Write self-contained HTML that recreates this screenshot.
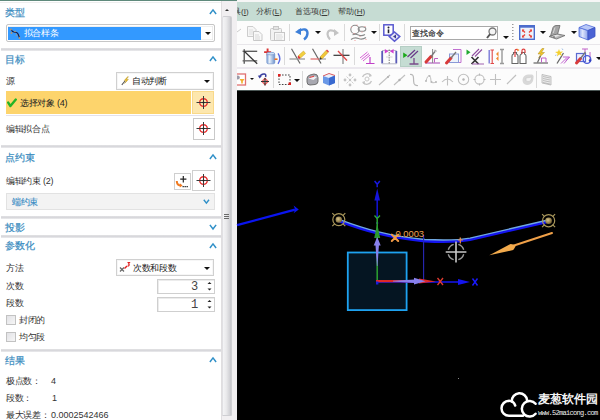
<!DOCTYPE html>
<html><head><meta charset="utf-8">
<style>
*{margin:0;padding:0;box-sizing:border-box}
html,body{width:600px;height:420px;overflow:hidden;background:#fff;font-family:"Liberation Sans",sans-serif;font-size:9px;color:#333}
.a{position:absolute}
.hdr{position:absolute;color:#3a8cc0;font-size:10px;line-height:10px;left:5px;white-space:nowrap;-webkit-text-stroke:0.2px #3a8cc0}
.lbl{position:absolute;color:#333;font-size:9px;line-height:10px;letter-spacing:-0.3px;left:6px;white-space:nowrap}
.sep{position:absolute;left:1px;width:220px;height:3px;background:linear-gradient(#e2e2e4,#d8d8dc 50%,#ececee)}
.chev{position:absolute;left:208px;width:10px;height:7px}
.box{position:absolute;border:1px solid #c9c9c9;background:#fff}
.dd{position:absolute;width:0;height:0;border-left:3px solid transparent;border-right:3px solid transparent;border-top:3px solid #111}
svg{position:absolute;overflow:visible}
</style></head><body>
<!-- LEFT PANEL -->
<div class="a" style="left:0;top:0;width:237px;height:1px;background:#5f8a7c"></div><div class="a" style="left:0;top:2px;width:221px;height:1px;background:#eeeeee"></div>

<div class="hdr" style="top:8px">类型</div>
<svg class="chev" style="left:208.7px;top:9.4px" width="8" height="6"><path d="M0.9 5 L4 0.9 L7.1 5" fill="none" stroke="#3090c8" stroke-width="1.5"/></svg>
<div class="box" style="left:6px;top:24.3px;width:208.5px;height:18px;border:1.3px solid #c6c6c6;border-radius:2px;box-shadow:inset 0 0 0 1px #fff, inset 0 0 0 1.6px #e2e2e2"></div>
<div class="a" style="left:8.3px;top:26.8px;width:192.5px;height:13.2px;background:#3399ff"></div>
<svg style="left:10px;top:28px" width="11" height="11"><path d="M1 1.5 Q2.5 4.5 5 4.2 Q7.5 4 8.5 7 L9.5 10" fill="none" stroke="#1a1a40" stroke-width="1.1"/><g fill="#b89870"><circle cx="1" cy="1.5" r="0.9"/><circle cx="1.5" cy="5" r="0.9"/><circle cx="5" cy="3.5" r="0.8"/><circle cx="6.5" cy="7" r="0.8"/><circle cx="9.5" cy="10" r="0.9"/></g></svg>
<div class="a" style="left:23.5px;top:28px;color:#fff;font-size:9px;line-height:10px;letter-spacing:-0.3px">拟合样条</div>
<div class="dd" style="left:205px;top:32px"></div>

<div class="sep" style="top:48px"></div>
<div class="hdr" style="top:55px">目标</div>
<svg class="chev" style="left:208.7px;top:56px" width="8" height="6"><path d="M0.9 5 L4 0.9 L7.1 5" fill="none" stroke="#3090c8" stroke-width="1.5"/></svg>
<div class="lbl" style="top:76px">源</div>
<div class="box" style="left:116px;top:72px;width:98px;height:17.5px;border:1.3px solid #d0d0d0;box-shadow:inset 0 0 0 1px #f6f6f6"></div>
<svg style="left:121px;top:76px" width="9" height="10"><path d="M0.8 8.8 L4 5" stroke="#555" stroke-width="1.1"/><path d="M6.8 0.5 L3.2 4.6 L5.2 4.8 L3.6 7.4 L7.4 3.4 L5.4 3.2 L7.4 0.8Z" fill="#f2c020" stroke="#a08020" stroke-width="0.4"/></svg>
<div class="a" style="left:132px;top:76px;color:#222;font-size:9px;line-height:10px;letter-spacing:-0.3px">自动判断</div>
<div class="dd" style="left:204px;top:80px"></div>

<div class="a" style="left:6px;top:91px;width:185px;height:23px;background:#fdd46c"></div>
<div class="a" style="left:192px;top:91px;width:22px;height:23px;background:#fde7ae;border:1px solid #f9d98a"></div>
<div class="a" style="left:6px;top:114.6px;width:208px;height:1.4px;background:#e4e2ea"></div>
<svg style="left:7px;top:98px" width="10" height="9"><path d="M1.2 4.6 L3.4 8 L8.8 1.6" fill="none" stroke="#22b426" stroke-width="2.4" stroke-linecap="round" stroke-linejoin="round"/></svg>
<div class="a" style="left:20px;top:98px;color:#222;font-size:9px;line-height:10px;letter-spacing:-0.3px">选择对象 (4)</div>
<svg style="left:196px;top:95px" width="16" height="16"><circle cx="7.5" cy="7.5" r="3.8" fill="none" stroke="#e83030" stroke-width="1.4"/><path d="M0.5 7.5 H14.5 M7.5 1 V14" stroke="#3a3a3a" stroke-width="1"/><circle cx="7.5" cy="7.5" r="1" fill="#222"/></svg>

<div class="lbl" style="top:124px">编辑拟合点</div>
<div class="box" style="left:193px;top:118px;width:22px;height:22px"></div>
<svg style="left:196px;top:121px" width="16" height="16"><circle cx="7.5" cy="7.5" r="3.8" fill="none" stroke="#e83030" stroke-width="1.4"/><path d="M0.5 7.5 H14.5 M7.5 1 V14" stroke="#3a3a3a" stroke-width="1"/><circle cx="7.5" cy="7.5" r="1" fill="#222"/></svg>

<div class="sep" style="top:145px"></div>
<div class="hdr" style="top:153px">点约束</div>
<svg class="chev" style="left:208.7px;top:154px" width="8" height="6"><path d="M0.9 5 L4 0.9 L7.1 5" fill="none" stroke="#3090c8" stroke-width="1.5"/></svg>
<div class="lbl" style="top:176px">编辑约束 (2)</div>
<div class="box" style="left:174px;top:173px;width:17px;height:17px;border-color:#cfcfcf"></div>
<svg style="left:175px;top:174px" width="15" height="15"><path d="M8.3 2 V8.4 M5.2 5.2 H11.4" stroke="#222" stroke-width="1.2"/><path d="M1.8 7 Q1.8 11.2 5.5 11.4" fill="none" stroke="#f07a20" stroke-width="2"/><path d="M4.8 9.2 L7.6 11.4 L4.8 13.4Z" fill="#f07a20"/><path d="M7.5 12.6 H13.5" stroke="#333" stroke-width="1.2" stroke-dasharray="1.4 0.6"/></svg>
<div class="box" style="left:192px;top:170px;width:23px;height:21px;border-color:#cfcfcf"></div>
<svg style="left:196px;top:173px" width="16" height="16"><circle cx="7.5" cy="7.5" r="3.8" fill="none" stroke="#e83030" stroke-width="1.4"/><path d="M0.5 7.5 H14.5 M7.5 1 V14" stroke="#3a3a3a" stroke-width="1"/><circle cx="7.5" cy="7.5" r="1" fill="#222"/></svg>
<div class="a" style="left:6px;top:193px;width:209px;height:17px;background:#f3f3f3;border:1px solid #e2e2e2"></div>
<div class="a" style="left:12px;top:197px;color:#3a8cc4;font-size:9px;line-height:10px;letter-spacing:-0.3px;-webkit-text-stroke:0.15px #3a8cc4">端约束</div>
<svg style="left:202.8px;top:198.8px" width="7" height="5"><path d="M0.8 0.8 L3.4 4.2 L6 0.8" fill="none" stroke="#3090c8" stroke-width="1.4"/></svg>

<div class="sep" style="top:216px"></div>
<div class="hdr" style="top:223px">投影</div>
<svg class="chev" style="left:208.7px;top:223.8px" width="8" height="6"><path d="M0.9 0.9 L4 5 L7.1 0.9" fill="none" stroke="#3090c8" stroke-width="1.5"/></svg>
<div class="sep" style="top:234.5px"></div>
<div class="hdr" style="top:241px">参数化</div>
<svg class="chev" style="left:208.7px;top:242.6px" width="8" height="6"><path d="M0.9 5 L4 0.9 L7.1 5" fill="none" stroke="#3090c8" stroke-width="1.5"/></svg>
<div class="lbl" style="top:263px">方法</div>
<div class="box" style="left:116px;top:258.7px;width:98px;height:17.8px;border:1.3px solid #d0d0d0;box-shadow:inset 0 0 0 1px #f6f6f6"></div>
<svg style="left:119px;top:261px" width="13" height="12"><path d="M1 6.5 L5 10.5 M5 6.5 L1 10.5" stroke="#666" stroke-width="1.2"/><path d="M5.5 7.5 L8 5" stroke="#e02020" stroke-width="1.5"/><path d="M8.5 1.5 H10.5 L9.5 3 Q11 3.5 9.5 5 H8.5" fill="none" stroke="#e02020" stroke-width="1.1"/></svg>
<div class="a" style="left:133px;top:263px;color:#222;font-size:9px;line-height:10px;letter-spacing:-0.3px">次数和段数</div>
<div class="dd" style="left:204px;top:267px"></div>
<div class="lbl" style="top:281px">次数</div>
<div class="box" style="left:157px;top:278.5px;width:57.5px;height:15px;border-color:#cfcfcf;box-shadow:inset 1px 1px 0 #ececec"></div>
<div class="a" style="left:191px;top:280.5px;color:#444;font-family:'Liberation Mono',monospace;font-size:12px;line-height:12px">3</div>
<svg style="left:206.5px;top:281px" width="5" height="11"><path d="M0.5 3 L2.5 1 L4.5 3Z M0.5 7.5 L2.5 9.5 L4.5 7.5Z" fill="#222"/></svg>
<div class="lbl" style="top:298px">段数</div>
<div class="box" style="left:157px;top:296.5px;width:57.5px;height:15px;border-color:#cfcfcf;box-shadow:inset 1px 1px 0 #ececec"></div>
<div class="a" style="left:191px;top:298.5px;color:#444;font-family:'Liberation Mono',monospace;font-size:12px;line-height:12px">1</div>
<svg style="left:206.5px;top:299px" width="5" height="11"><path d="M0.5 3 L2.5 1 L4.5 3Z M0.5 7.5 L2.5 9.5 L4.5 7.5Z" fill="#222"/></svg>
<div class="a" style="left:6px;top:315px;width:9.5px;height:9.5px;border:1px solid #c2c2c2;background:linear-gradient(135deg,#e2e2e6,#f6f6f6)"></div>
<div class="a" style="left:19px;top:315px;color:#333;font-size:9px;line-height:10px;letter-spacing:-0.3px">封闭的</div>
<div class="a" style="left:6px;top:332px;width:9.5px;height:9.5px;border:1px solid #c2c2c2;background:linear-gradient(135deg,#e2e2e6,#f6f6f6)"></div>
<div class="a" style="left:19px;top:332px;color:#333;font-size:9px;line-height:10px;letter-spacing:-0.3px">均匀段</div>

<div class="sep" style="top:349px"></div>
<div class="hdr" style="top:356px">结果</div>
<svg class="chev" style="left:208.7px;top:357.3px" width="8" height="6"><path d="M0.9 5 L4 0.9 L7.1 5" fill="none" stroke="#3090c8" stroke-width="1.5"/></svg>
<div class="lbl" style="top:376px">极点数：</div>
<div class="a" style="left:51px;top:376px;color:#333;font-size:9px;line-height:10px;letter-spacing:-0.3px">4</div>
<div class="lbl" style="top:393px">段数：</div>
<div class="a" style="left:52px;top:393px;color:#333;font-size:9px;line-height:10px;letter-spacing:-0.3px">1</div>
<div class="lbl" style="top:410px">最大误差：</div><div class="a" style="left:51px;top:410px;color:#333;font-size:9px;line-height:10px">0.0002542466</div>

<!-- SCROLLBAR -->
<div class="a" style="left:221px;top:1px;width:16px;height:419px;background:#f1eff1;border-left:1px solid #e0dee0"></div>
<div class="a" style="left:224.5px;top:9px;width:0;height:0;border-left:2.5px solid transparent;border-right:2.5px solid transparent;border-bottom:2.5px solid #333"></div>
<div class="a" style="left:222px;top:16px;width:10px;height:400px;background:linear-gradient(90deg,#f4f4f6,#eaeaec 40%,#d2d2d6 85%,#c4c4c8);border:1px solid #cfcfd3;border-left-color:#e0e0e3;border-radius:2px 2px 1px 1px"></div>
<div class="a" style="left:224px;top:214px;width:5px;height:1px;background:#6a6a6a"></div><div class="a" style="left:224px;top:216px;width:5px;height:1px;background:#6a6a6a"></div><div class="a" style="left:224px;top:218px;width:5px;height:1px;background:#6a6a6a"></div>

<!-- RIGHT NX WINDOW -->
<div class="a" style="left:237px;top:0;width:363px;height:420px;background:#000"></div>
<div class="a" style="left:237px;top:0;width:363px;height:2px;background:#f6f6f6"></div>
<div class="a" style="left:237px;top:2px;width:363px;height:19px;background:#c6dcd3"></div>
<div class="a" style="left:237px;top:21px;width:363px;height:69px;background:#fcfcfc"></div>
<div class="a" style="left:237px;top:43.5px;width:363px;height:1px;background:#e8e6ea"></div>
<div class="a" style="left:237px;top:67px;width:363px;height:1.5px;background:#ebe8ee"></div><div class="a" style="left:237px;top:89.5px;width:363px;height:1px;background:#4a5654"></div>


<!-- MENU -->
<div class="a" style="left:237px;top:2px;width:363px;height:19px;overflow:hidden;color:#3a3a3a;font-size:8px;line-height:10px;white-space:nowrap">
<span class="a" style="left:-4px;top:5px">具(<u>I</u>)</span>
<span class="a" style="left:19px;top:5px">分析(<u>L</u>)</span>
<span class="a" style="left:58px;top:5px">首选项(<u>P</u>)</span>
<span class="a" style="left:101px;top:5px">帮助(<u>H</u>)</span>
</div>
<!-- ROW1 -->
<svg style="left:237px;top:27px" width="6" height="8"><path d="M0 5 L4 2" stroke="#ccc" stroke-width="1"/></svg>
<svg style="left:247px;top:26px" width="16" height="15"><path d="M0.5 0.5 H6 L9 3.5 V10.5 H0.5Z" fill="#f6f6f6" stroke="#cdcdcd"/><path d="M2 4 H6 M2 6 H7 M2 8 H7" stroke="#dedede"/><path d="M6.5 5.5 H12 L15 8.5 V14.5 H6.5Z" fill="#f8f8f8" stroke="#c8c8c8"/><path d="M8 9 H12 M8 11 H13 M8 13 H13" stroke="#d8d8d8"/></svg>
<svg style="left:270px;top:26px" width="15" height="15"><rect x="0.5" y="2.5" width="11" height="12" rx="1" fill="#f2f2f2" stroke="#cacaca"/><rect x="3.5" y="0.5" width="5" height="3" fill="#e4e4e4" stroke="#c8c8c8"/><rect x="4.5" y="6.5" width="10" height="8" fill="#f8f8f8" stroke="#c6c6c6"/><path d="M6 9 H12 M6 11 H13 M6 13 H12" stroke="#dcdcdc"/></svg>
<div class="a" style="left:289px;top:24px;width:1px;height:17px;background:#dadada"></div>
<svg style="left:295px;top:27px" width="15" height="13"><path d="M3 4 Q12 0 12.5 6 Q12.5 10 9 12.5" fill="none" stroke="#3d7fd8" stroke-width="2.4"/><path d="M0 5 L6 1 L6 8Z" fill="#3d7fd8"/></svg>
<div class="dd" style="left:315px;top:31px"></div>
<svg style="left:325px;top:28px" width="15" height="12"><path d="M11 4 Q3 0 2.5 6 Q2.5 9 5 11.5" fill="none" stroke="#c4c4c4" stroke-width="2.2"/><path d="M14 5 L9 1 L9 8Z" fill="#c4c4c4"/></svg>
<div class="a" style="left:344px;top:24px;width:1px;height:17px;background:#dadada"></div>
<svg style="left:350px;top:24px" width="17" height="17"><circle cx="5" cy="5.5" r="4.2" fill="none" stroke="#8a8a8a" stroke-width="1.1"/><ellipse cx="12" cy="5" rx="3.8" ry="2.3" fill="none" stroke="#8a8a8a" stroke-width="1.1"/><path d="M2.5 10.8 Q5.5 9.5 8.5 11 T15 10.5" fill="none" stroke="#8a8a8a" stroke-width="1.1"/><path d="M1 15.5 Q4.5 13 8.5 14.5 T16 13.5" fill="none" stroke="#8a8a8a" stroke-width="1.2"/><g fill="#f09090"><circle cx="1.5" cy="3" r=".6"/><circle cx="7" cy="1" r=".6"/><circle cx="15" cy="2.5" r=".6"/><circle cx="4" cy="9.5" r=".6"/><circle cx="10" cy="12.5" r=".6"/><circle cx="16" cy="15.5" r=".6"/><circle cx="5" cy="16.5" r=".6"/><circle cx="12" cy="8" r=".6"/></g></svg>
<div class="dd" style="left:371px;top:31px"></div>
<div class="a" style="left:379px;top:24px;width:1px;height:17px;background:#dadada"></div>
<svg style="left:383px;top:24px" width="18" height="18"><rect x="0.8" y="0.8" width="9.4" height="10.4" fill="#fff" stroke="#5a5ad0" stroke-width="1.5"/><circle cx="5.5" cy="3.6" r="1" fill="#223"/><path d="M5.5 5.4 V9.2" stroke="#223" stroke-width="1.6"/><path d="M11.5 8 L16.8 12.6 L11.5 17.2 L6.2 12.6Z" fill="#e4e4f4" stroke="#5a5ad0" stroke-width="1.5"/><path d="M10 12.6 L13 10.6 V14.6Z" fill="#3a3a90"/></svg>
<div class="a" style="left:404px;top:24px;width:1px;height:17px;background:#dadada"></div>
<div class="a" style="left:410px;top:26px;width:88px;height:14px;border:1px solid #a9a9a9;background:#fff"></div>
<div class="a" style="left:412px;top:28.5px;color:#222;font-size:8px;line-height:10px;-webkit-text-stroke:0.15px #222">查找命令</div>
<svg style="left:486px;top:27px" width="11" height="12"><circle cx="6.5" cy="4.5" r="3.5" fill="#f4f4f4" stroke="#777" stroke-width="1.3"/><path d="M4.2 7 L1 11" stroke="#555" stroke-width="2"/></svg>
<div class="dd" style="left:503px;top:36px"></div>
<svg style="left:512px;top:23px" width="3" height="19"><g fill="#999"><rect x="0" y="1" width="1.5" height="1"/><rect x="0" y="4" width="1.5" height="1"/><rect x="0" y="7" width="1.5" height="1"/><rect x="0" y="10" width="1.5" height="1"/><rect x="0" y="13" width="1.5" height="1"/><rect x="0" y="16" width="1.5" height="1"/></g></svg>
<svg style="left:519px;top:25px" width="16" height="15"><rect x="0.7" y="0.7" width="14.6" height="13.6" fill="#eef2fa" stroke="#4c6ccc" stroke-width="1.4"/><rect x="0.7" y="0.7" width="14.6" height="2" fill="#4c6ccc"/><g stroke="#e8453c" stroke-width="1.4"><path d="M3.5 5 L6 7.5 M12.5 5 L10 7.5 M3.5 12 L6 9.5 M12.5 12 L10 9.5"/></g><g fill="#e8453c"><path d="M3 4.5 H5.5 L3 7Z M13 4.5 H10.5 L13 7Z M3 12.5 H5.5 L3 10Z M13 12.5 H10.5 L13 10Z"/></g></svg>
<div class="dd" style="left:540px;top:31px"></div>
<svg style="left:548px;top:24px" width="19" height="17"><path d="M2.5 12 L5 3.5 Q6 1.5 8 1.5 L12 1.5 L9.5 10.5Z" fill="#a4a4a4" stroke="#6a6a6a" stroke-width="0.8"/><path d="M1 12.5 L9.5 10 L17 11.5 L8.5 15Z" fill="#b8b8b8" stroke="#6a6a6a" stroke-width="0.8"/><path d="M4 12 L8.5 10.8 L12 11.6 L7.6 13Z" fill="#e6e6e6"/><path d="M5.2 9 L7 3.5" stroke="#d8d8d8" stroke-width="1"/><circle cx="6" cy="13" r=".8" fill="#555"/></svg>
<div class="dd" style="left:571px;top:31px"></div>
<svg style="left:578px;top:23px" width="19" height="18"><defs><linearGradient id="cf" x1="0" x2="1"><stop offset="0" stop-color="#8fa8f0"/><stop offset=".4" stop-color="#dfe6fc"/><stop offset="1" stop-color="#8aa0ea"/></linearGradient></defs><path d="M1 4.5 L10 7.5 L10 17 L1 13.5Z" fill="url(#cf)" stroke="#4f6ad8" stroke-width=".8"/><path d="M1 4.5 L8 1.5 L17 4.5 L10 7.5Z" fill="#b8c8f8" stroke="#4f6ad8" stroke-width=".8"/><path d="M10 7.5 L17 4.5 L17 13.5 L10 17Z" fill="#4a62d4" stroke="#3a52c0" stroke-width=".8"/></svg>

<!-- ROW2 -->
<svg style="left:242px;top:49px" width="17" height="16"><path d="M0.6 2.25 H15.2" stroke="#333" stroke-width="1.1"/><path d="M0.6 11.8 H15.2" stroke="#777" stroke-width="1.5"/><path d="M2.25 0.2 V14.8" stroke="#666" stroke-width="1.5"/><path d="M2.25 2.25 L15.2 14.8" stroke="#333" stroke-width="1.2"/></svg>
<svg style="left:263px;top:48px" width="20" height="17"><path d="M4.6 0.6 V7.6 M1.1 4.1 H8.1" stroke="#d83434" stroke-width="1.9"/><defs><linearGradient id="cyl" x1="0" x2="1"><stop offset="0" stop-color="#7fa4d8"/><stop offset=".35" stop-color="#e8f0fa"/><stop offset="1" stop-color="#6a90cc"/></linearGradient></defs><rect x="3.8" y="5" width="8" height="10.8" rx="1.5" fill="url(#cyl)" stroke="#6a8cc8" stroke-width=".6"/><ellipse cx="7.8" cy="5.6" rx="4" ry="1.3" fill="#cfe0f6" stroke="#6a8cc8" stroke-width=".6"/><path d="M11.5 11.2 H14.5" stroke="#f07020" stroke-width="1.6"/><path d="M15 5.3 Q18.6 10.5 15 15.8" fill="none" stroke="#5a6ae0" stroke-width="1.4"/></svg>
<div class="a" style="left:284px;top:47px;width:1px;height:18px;background:#dadada"></div>
<svg style="left:289px;top:48px" width="18" height="17"><path d="M2.5 0.8 L11 15.5" stroke="#666" stroke-width="1.2"/><path d="M0.5 11 H16" stroke="#999" stroke-width="1.3"/><path d="M9.5 7.5 L14.5 3 L16.5 5.5 L11.5 10Z" fill="#f2d040" stroke="#c8a020" stroke-width=".5"/><path d="M9.5 7.5 L11.5 10 L10 11 L8.5 9Z" fill="#e03030"/></svg>
<svg style="left:310px;top:48px" width="18" height="17"><path d="M2.5 0.8 L11 15.5" stroke="#666" stroke-width="1.2"/><path d="M0.5 11 H9" stroke="#e07070" stroke-width="1.3"/><path d="M9 11 H16" stroke="#aaa" stroke-width="1.3"/><path d="M10 9 L16 2.5 L18 4.5 L12 11Z" fill="#f2c838" stroke="#b89020" stroke-width=".5"/><path d="M16 2.5 L17 1.5 L19 3.5 L18 4.5Z" fill="#e04040"/><path d="M10 9 L12 11 L9.5 11.8Z" fill="#333"/></svg>
<svg style="left:333px;top:48px" width="17" height="17"><path d="M10 1 V16" stroke="#888" stroke-width="1.2"/><path d="M0.5 7.3 H16.5" stroke="#333" stroke-width="1.2"/><path d="M5 3 L14 12.5" stroke="#e04848" stroke-width="1.3"/></svg>
<div class="a" style="left:354px;top:47px;width:1px;height:18px;background:#dadada"></div>
<svg style="left:359px;top:48px" width="17" height="17"><path d="M1 10 L8.5 4 M2.5 11.5 L10 5.5 M4 13 L11 7" stroke="#d050d0" stroke-width=".9"/><path d="M11 9 V15 M7 15.5 H15.5" stroke="#c040c8" stroke-width="1.2"/></svg>
<svg style="left:380.5px;top:48px" width="17" height="17"><path d="M1.2 3 V15.5 M15.3 3 V15.5" stroke="#5a5ab8" stroke-width="1.8"/><path d="M1 2.5 H15.5 M1 15.8 H15.5" stroke="#b8b8c8" stroke-width="1"/><path d="M8.2 1.5 V16" stroke="#777" stroke-width="1" stroke-dasharray="1.5 1"/><path d="M3.8 1 L7.5 3.2 L3.8 5.4Z M12.6 1 L8.9 3.2 L12.6 5.4Z" fill="#d040d0"/><path d="M5 9 H11.5" stroke="#ccc" stroke-width=".8"/></svg>
<div class="a" style="left:400px;top:46px;width:22px;height:21px;background:#c5dcd3;border:1px solid #b5cec4"></div>
<svg style="left:402px;top:48px" width="18" height="17"><path d="M1.2 4.5 L5.5 7.3 L1.2 10Z" fill="#1aa81a"/><path d="M5.5 9 L13 2 M8.5 10 L16 3" stroke="#6a3a8a" stroke-width="1.2"/><path d="M12 10 V15.5 M7.5 16 H16.5" stroke="#7a4a8a" stroke-width="1.3"/></svg>
<svg style="left:424px;top:48px" width="17" height="17"><path d="M1 15 H16" stroke="#b060c0" stroke-width="1.2"/><path d="M8.6 1 V15" stroke="#888" stroke-width="1"/><path d="M10.5 14.5 V10.5 H14" fill="none" stroke="#c060c0" stroke-width="1"/><path d="M2 14 L7 8.5" stroke="#d83a3a" stroke-width="3" stroke-linecap="round"/><path d="M7 8.5 L11 3.5" stroke="#777" stroke-width="1.3"/><path d="M10.5 2 L12.5 3.5" stroke="#aaa" stroke-width="1.5"/></svg>
<svg style="left:445px;top:48px" width="18" height="17"><path d="M8 1.5 H16 V14.5 H8" fill="none" stroke="#c070d0" stroke-width="1"/><rect x="4.5" y="6" width="9" height="8.5" fill="#eef2fb" stroke="#8a9ad8" stroke-width="1"/><path d="M1.5 15 L6 10" stroke="#d83a3a" stroke-width="3" stroke-linecap="round"/><path d="M6 10 L11 4" stroke="#777" stroke-width="1.3"/></svg>
<svg style="left:466px;top:48px" width="18" height="18"><path d="M0.5 1.5 L4.5 4.2 L0.5 7Z" fill="#20a830"/><path d="M6 8 L13 1 M9 8.5 L16 1.5" stroke="#9050a0" stroke-width="1.1"/><path d="M5.5 9 L12.5 16 M12.5 9 L5.5 16" stroke="#333" stroke-width="1.7"/><path d="M6 16 H18" stroke="#a060b0" stroke-width="1"/></svg>
<svg style="left:488px;top:48px" width="17" height="17"><path d="M1.2 2 V15.5" stroke="#7a7ad8" stroke-width="1.4"/><path d="M2.5 2 H6 M4.2 2 V15.5 M2.5 15.5 H6" fill="none" stroke="#e04848" stroke-width="1.1"/><path d="M10.5 3.5 L8 6 L10.5 8.5Z M10.5 8 L8 10.5 L10.5 13Z" fill="#f08a30"/><path d="M12 1.5 H16 M14 1.5 V15.5 M12 15.5 H16" fill="none" stroke="#999" stroke-width="1.4"/></svg>
<svg style="left:511px;top:48px" width="17" height="17"><path d="M1 8 Q1 6.5 2.5 6 V4.5 H5.5 V6 Q7 6.5 7 8 V15.5 H1Z" fill="#fff" stroke="#666" stroke-width="1.1"/><path d="M9 8 Q9 6.5 10.5 6 V4.5 H13.5 V6 Q15 6.5 15 8 V15.5 H9Z" fill="#fff" stroke="#666" stroke-width="1.1"/><path d="M4 9 V3 Q4 1 6 1.5 L7 2" fill="none" stroke="#e04040" stroke-width="1.2"/><path d="M11 6 V2.5 Q11 1.2 12.5 1.2 Q14 1.2 14 2.5 V5" fill="none" stroke="#e04040" stroke-width="1.2"/><path d="M6 0.5 L8.5 2 L6.5 3.5Z" fill="#f09030"/></svg>
<svg style="left:533px;top:48px" width="16" height="17"><path d="M9 0.5 L5 6 H8 L5.5 10 L11.5 4.5 H8.5 L11 0.5Z" fill="#f2c828" stroke="#b08a20" stroke-width=".5"/><path d="M4.5 14.5 L7.5 8" stroke="#666" stroke-width="1.2"/><path d="M0.5 15 H15" stroke="#555" stroke-width="1.1"/><path d="M8.5 14.5 V10 H13 V14.5" fill="none" stroke="#c060c8" stroke-width="1"/></svg>
<svg style="left:554px;top:48px" width="17" height="17"><path d="M3 15.5 L9.5 5" stroke="#666" stroke-width="1.3"/><path d="M5 1 L6 3.8 L9 3.5 L6.8 5.4 L8 8 L5.3 6.6 L3 8.5 L3.6 5.6 L1 4 L4 3.6Z" fill="#f4d030"/><path d="M8 0.5 L9 2 M1 7.5 L2.5 7" stroke="#8ab0e0" stroke-width=".8"/><path d="M9 9 H15.5 L10 15.5 M12 12.5 L15.5 9" fill="none" stroke="#c060d0" stroke-width="1"/><path d="M7 15.5 L13 9.5" stroke="#c060d0" stroke-width="1"/></svg>
<svg style="left:575px;top:48px" width="18" height="17"><path d="M7 1 H13 M10 1 V4 M15 4 V14" fill="none" stroke="#c060c8" stroke-width="1"/><rect x="1.5" y="5.5" width="9" height="8" fill="#eef" stroke="#5a6ad0" stroke-width="1.2"/><circle cx="12" cy="11.5" r="3.8" fill="none" stroke="#4a5ad8" stroke-width="1.3"/><circle cx="15" cy="12.5" r="1.3" fill="#3040c0"/><path d="M1.5 15 L5.5 10.5" stroke="#d83a3a" stroke-width="3" stroke-linecap="round"/><path d="M5.5 10.5 L10.5 4" stroke="#777" stroke-width="1.3"/></svg>
<div class="dd" style="left:596px;top:57px"></div>

<!-- ROW3 -->
<svg style="left:237px;top:73px;overflow:hidden" width="10" height="13"><rect x="-4" y="1" width="12.5" height="11" fill="#fff" stroke="#e07070" stroke-width="1.3"/><circle cx="0.8" cy="4.5" r="2" fill="#9a9aa8"/><path d="M2.5 6 H7.5 L5.8 8.5 V10.5 H4.2 V8.5Z" fill="#f2b030"/></svg>
<div class="dd" style="left:249.5px;top:78px;border-left-width:2.5px;border-right-width:2.5px;border-top-width:2.5px"></div>
<svg style="left:257px;top:73px" width="14" height="14"><path d="M2.5 4 Q4 0.5 7.5 1 Q9.5 1.5 8.5 4" fill="none" stroke="#3a40a0" stroke-width="1.5"/><path d="M0.8 2.5 L2.6 5.5 L4.8 3Z" fill="#3a40a0"/><path d="M8 5.5 L11 8.5 L8 11.5 L5 8.5Z" fill="none" stroke="#f06060" stroke-width="1.4"/><path d="M8 5 V12.5 M4 8.5 H12" stroke="#333" stroke-width="1.2"/></svg>
<div class="a" style="left:273px;top:71px;width:1px;height:17px;background:#dadada"></div>
<svg style="left:278px;top:74px" width="14" height="12"><rect x="1" y="1" width="11" height="9.5" fill="none" stroke="#444" stroke-width="1" stroke-dasharray="1.6 1.4"/><rect x="0" y="0" width="2.5" height="2.5" fill="#e02020"/><rect x="10.5" y="8.5" width="2.5" height="2.5" fill="#e02020"/></svg>
<div class="dd" style="left:294px;top:79px"></div>
<div class="a" style="left:302px;top:71px;width:1px;height:17px;background:#dadada"></div>
<svg style="left:306px;top:73px" width="13" height="13"><path d="M1 5.5 Q1 3 4 2 L8 1 Q12 1 12 4.5 L12 8.5 Q12 11 9 11.5 L4 12 Q1 12 1 9Z" fill="#a8a8b0" stroke="#666" stroke-width="0.9"/><path d="M2.5 5.5 L6 3 L11 4 L7.5 7Z" fill="#f0f0f4"/><path d="M3.5 4.5 L8 3.2" stroke="#e04040" stroke-width="1.1"/></svg>
<svg style="left:322px;top:72px" width="14" height="14"><path d="M1 4 L7 1.5 L13 3.5 L13 11 L7 13.5 L1 11Z" fill="#6a98e6"/><path d="M1 4 L7 1.5 L13 3.5 L7 6Z" fill="#e8eefa"/><path d="M7 6 L13 3.5 L13 11 L7 13.5Z" fill="#3a6ad0"/><path d="M1 4 L7 1.5 L13 3.5" fill="none" stroke="#e05050" stroke-width="0.9"/></svg>
<div class="a" style="left:338px;top:71px;width:1px;height:17px;background:#dadada"></div>
<svg style="left:343px;top:73px" width="14" height="14"><g fill="#c4c4c4"><circle cx="7" cy="2" r="1.4"/><circle cx="2" cy="7" r="1.4"/><circle cx="12" cy="7" r="1.4"/><circle cx="7" cy="12" r="1.4"/><circle cx="7" cy="7" r="1.2"/></g><path d="M3.5 3.5 L5.5 5.5 M10.5 3.5 L8.5 5.5 M3.5 10.5 L5.5 8.5 M10.5 10.5 L8.5 8.5" stroke="#d0d0d0" stroke-width="1"/></svg>
<svg style="left:360px;top:72px" width="14" height="14"><path d="M2.5 5 A5 5 0 0 1 11 3.5 M11.5 9 A5 5 0 0 1 3 10.5" fill="none" stroke="#c4c4c4" stroke-width="1.3"/><circle cx="7" cy="7" r="2" fill="none" stroke="#c8c8c8" stroke-width="1"/><path d="M9.5 1.5 L12 4 L9 5Z M4.5 12.5 L2 10 L5 9Z" fill="#c4c4c4"/></svg>
<svg style="left:378px;top:74px" width="13" height="12"><path d="M1 11 L12 1" stroke="#c0c0c0" stroke-width="1.1"/><circle cx="10" cy="3" r="1" fill="#b0b0b0"/></svg>
<svg style="left:393px;top:74px" width="13" height="12"><path d="M1 11 L12 1" stroke="#c0c0c0" stroke-width="1.1"/><circle cx="6.5" cy="6" r="1.2" fill="#b0b0b0"/></svg>
<svg style="left:409px;top:73px" width="10" height="14"><path d="M1 1.5 Q4.5 1 4.5 5 Q4.5 9 5 10.5 Q6 13 9 12.5" fill="none" stroke="#b8b8b8" stroke-width="1.2"/></svg>
<svg style="left:425px;top:73px" width="12" height="13"><path d="M1 8 Q2.5 2 4.5 3 Q6 4 6 8 Q7 11 11 9" fill="none" stroke="#c0c0c0" stroke-width="1"/><g fill="#b8b8b8"><circle cx="4.5" cy="3" r="1.1"/><circle cx="6.5" cy="9" r="1.1"/><circle cx="11" cy="9" r="1"/><circle cx="1" cy="8" r="1"/></g></svg>
<svg style="left:441px;top:74px" width="13" height="12"><path d="M6.5 2 V11.5 M1 8 Q6.5 2 12 8" fill="none" stroke="#c0c0c0" stroke-width="1.1"/></svg>
<svg style="left:457px;top:73px" width="13" height="13"><circle cx="6.5" cy="6.5" r="5.2" fill="none" stroke="#c0c0c0" stroke-width="1.1"/><circle cx="6.5" cy="6.5" r="1.2" fill="#b4b4b4"/></svg>
<svg style="left:473px;top:73px" width="13" height="13"><circle cx="6.5" cy="6.5" r="4.6" fill="none" stroke="#c0c0c0" stroke-width="1.1"/><path d="M6.5 0.5 V2.5 M6.5 10.5 V12.5 M0.5 6.5 H2.5 M10.5 6.5 H12.5" stroke="#b8b8b8" stroke-width="1.1"/></svg>
<svg style="left:490px;top:74px" width="11" height="11"><path d="M5.5 0 V11 M0 5.5 H11" stroke="#c0c0c0" stroke-width="1.1"/></svg>
<svg style="left:506px;top:74px" width="11" height="11"><path d="M1 10 L10 1" stroke="#c0c0c0" stroke-width="1.2"/></svg>
<svg style="left:521px;top:73px" width="14" height="13"><path d="M1.5 7 Q2 2 7 1.5 L11 1.5 Q13 2 12.5 5 L12 8 Q10 12 6 12 Q1.5 11.5 1.5 7Z" fill="#d8d8d8"/><path d="M5 5 L11 4 L9.5 8 Q7 9 5 8Z" fill="#f2f2f2" stroke="#c8c8c8" stroke-width=".6"/></svg>
<div class="a" style="left:536px;top:71px;width:1px;height:17px;background:#dadada"></div>
<svg style="left:541px;top:73px" width="12" height="13"><path d="M1 1.5 L10 3.5 V12 L1 10Z" fill="#ececec" stroke="#aaa" stroke-width=".7"/><path d="M2 3.5 L9 5 M2 5.5 L9 7 M2 7.5 L9 9 M2 9.5 L9 11" stroke="#aaa" stroke-width=".7"/></svg>


<!-- GRAPHICS -->
<svg style="left:0;top:0" width="600" height="420">
  <defs>
    <radialGradient id="ball" cx="40%" cy="40%" r="60%"><stop offset="0" stop-color="#d8c488"/><stop offset="1" stop-color="#7a6636"/></radialGradient>
  </defs>
  <!-- left blue line -->
  <path d="M237 225.2 L295 209.6" stroke="#0a14f0" stroke-width="2.3"/>
  <path d="M293.6 205.6 L298.8 209.4 L293.6 213.2 L295.2 209.5Z" fill="#0a14f0"/>
  <!-- square -->
  <rect x="347.8" y="252.5" width="58.8" height="57.6" fill="#051522" stroke="#1ea2f0" stroke-width="1.8"/>
  <!-- curve -->
  <path d="M339 220.8 C 365 230.5, 390 238, 425 241 C 445 242, 458 241.8, 470 239.6 L 548 221.5" fill="none" stroke="#1414f0" stroke-width="2.9"/>
  <path d="M339 219.3 C 365 229, 390 236.5, 425 239.5 C 445 240.5, 458 240.3, 470 238.1 L 548 220" fill="none" stroke="#70a8e0" stroke-width="1.3"/>
  <!-- thin vertical -->
  <path d="M423.6 235 V282" stroke="#2828b8" stroke-width="1.1"/>
  <!-- Y axis -->
  <path d="M377.2 199 V219" stroke="#1212c8" stroke-width="1.6"/>
  <path d="M374.4 200.5 L377.2 188.5 L380 200.5Z" fill="#1515dc"/>
  <path d="M374.6 181 L377.2 184.3 L379.8 181 M377.2 184.3 V187.3" fill="none" stroke="#1818e0" stroke-width="1.5"/>
  <rect x="376.2" y="222" width="2" height="2" fill="#2020c0"/>
  <!-- green Y -->
  <path d="M374.5 215.5 L377.2 218.5 L380 215.5" fill="none" stroke="#30a838" stroke-width="1.3"/>
  <path d="M377.2 218 V282" stroke="#2a9a30" stroke-width="1.6"/>
  <path d="M374.2 238 L377.2 224 L380.2 238Z" fill="#2a9a30"/>
  <!-- X axes -->
  <path d="M377 282 H462" stroke="#1414f0" stroke-width="1.6"/>
  <path d="M458 279 L470 282 L458 285Z" fill="#1414f0"/>
  <path d="M472.5 278.5 L477.5 285.5 M477.5 278.5 L472.5 285.5" stroke="#1a1aff" stroke-width="1.4"/>
  <path d="M376 281.2 H422" stroke="#e02828" stroke-width="2.2"/>
  <path d="M419 278.5 L436 281.5 L419 283.5Z" fill="#e02828"/>
  <path d="M393 280.8 L415 279.4 L415 283 L393 281.6Z" fill="#8880ec"/>
  <path d="M414 277.8 L425.5 281.2 L414 284.6Z" fill="#8880ec"/><rect x="376" y="281.5" width="2.4" height="3" fill="#1a20e0"/>
  <path d="M437.5 278 L443 285 M443 278 L437.5 285" stroke="#e03a30" stroke-width="1.3"/>
  <!-- lavender Y arrow -->
  <path d="M375.4 244 L376.9 266 L377.5 266 L379 244Z" fill="#8880ec"/>
  <path d="M373.7 245.5 L377.2 237 L380.7 245.5Z" fill="#8880ec"/>
  <!-- poles -->
  <g stroke="#a8965a" stroke-width="1.2" fill="none">
    <circle cx="338.8" cy="219.6" r="6"/>
    <path d="M332.3 213.1 L334.8 215.6 M345.3 213.1 L342.8 215.6 M332.3 226.1 L334.8 223.6 M345.3 226.1 L342.8 223.6"/>
    <circle cx="548.6" cy="220.7" r="6.1"/>
    <path d="M542.1 214.2 L544.6 216.7 M555.1 214.2 L552.6 216.7 M542.1 227.2 L544.6 224.7 M555.1 227.2 L552.6 224.7"/>
  </g>
  <circle cx="338.8" cy="219.6" r="3.2" fill="url(#ball)"/>
  <circle cx="548.6" cy="220.7" r="3.3" fill="url(#ball)"/>
  <!-- orange x marker + text -->
  <path d="M391.8 234.6 L398.2 241 M398.2 234.6 L391.8 241" stroke="#f39a45" stroke-width="2" stroke-linecap="round"/>
  <text x="395.4" y="237.2" fill="#f0a050" font-size="9.4" font-family="Liberation Sans">0.0003</text>
  <path d="M460.3 237.5 V243.5" stroke="#e88848" stroke-width="1.3"/>
  <path d="M458 240 H463" stroke="#e88848" stroke-width="1"/>
  <!-- cursor -->
  <g stroke="#9a9a9a" stroke-width="1.4" fill="none">
    <path d="M448.3 249.7 A8 8 0 0 1 453.7 244.3 M458.3 244.3 A8 8 0 0 1 463.7 249.7 M463.7 254.3 A8 8 0 0 1 458.3 259.7 M453.7 259.7 A8 8 0 0 1 448.3 254.3"/>
  </g>
  <path d="M445.7 252 H466.4 M456 241.5 V262.5" stroke="#c8c8c8" stroke-width="1.6"/>
  <!-- orange vector -->
  <path d="M514 245.5 L552 233" stroke="#f0a048" stroke-width="2" stroke-linecap="round"/>
  <path d="M489.3 255.2 L510.6 244 Q 513.5 244.2 515.8 245.6 Q 514.6 248.8 513.2 250.1 Z" fill="#f2aa4c"/>
  <!-- stray dot -->
  <rect x="458" y="378" width="1" height="1" fill="#888"/>
  <!-- watermark -->
  <g fill="none" stroke="#fff" stroke-width="2.5" stroke-linecap="round">
    <path d="M523 415.8 H509 A7.5 7.5 0 0 1 509 400.8 A7 7 0 0 1 515.2 405.5"/>
    <path d="M511.8 401.5 A7.6 7.6 0 0 1 527.2 400.5"/>
    <path d="M535.6 403.8 A7.8 7.8 0 1 0 535.6 413.8"/>
  </g>
</svg>
<div class="a" style="left:538px;top:393px;color:#f4f4f4;font-size:12px;line-height:13px;letter-spacing:0px;white-space:nowrap;font-weight:bold">麦葱软件园</div>
<div class="a" style="left:538px;top:409.5px;color:#eee;font-family:'Liberation Mono',monospace;font-size:7px;line-height:7px;letter-spacing:-0.7px;white-space:nowrap">www.52maicong.com</div>

</body></html>
